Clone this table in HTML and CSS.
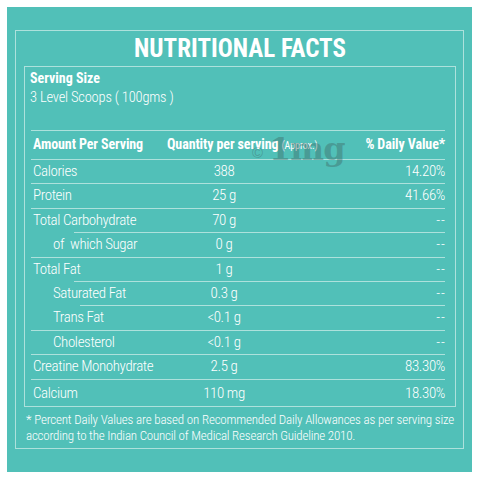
FILE: index.html
```html
<!DOCTYPE html>
<html>
<head>
<meta charset="utf-8">
<link rel="stylesheet" href="styles.css">
</head>
<body>
<div class="card">
  <div class="frame">
    <h1 class="title">NUTRITIONAL FACTS</h1>
    <div class="box">
      <div class="serving">
        <div class="serving-label">Serving Size</div>
        <div class="serving-value">3 Level Scoops ( 100gms )</div>
      </div>
      <div class="table">
        <div class="row head">
          <span class="c1">Amount Per Serving</span>
          <span class="c2">Quantity per serving <small>(Approx.)</small></span>
          <span class="c3">% Daily Value*</span>
        </div>
        <div class="row">
          <span class="c1">Calories</span><span class="c2">388</span><span class="c3">14.20%</span>
        </div>
        <div class="row">
          <span class="c1">Protein</span><span class="c2">25 g</span><span class="c3">41.66%</span>
        </div>
        <div class="row ind-line">
          <span class="c1">Total Carbohydrate</span><span class="c2">70 g</span><span class="c3 dash">--</span>
        </div>
        <div class="row">
          <span class="c1 sub">of&nbsp; which Sugar</span><span class="c2">0 g</span><span class="c3 dash">--</span>
        </div>
        <div class="row ind-line">
          <span class="c1">Total Fat</span><span class="c2">1 g</span><span class="c3 dash">--</span>
        </div>
        <div class="row ind-line2">
          <span class="c1 sub">Saturated Fat</span><span class="c2">0.3 g</span><span class="c3 dash">--</span>
        </div>
        <div class="row">
          <span class="c1 sub">Trans Fat</span><span class="c2">&lt;0.1 g</span><span class="c3 dash">--</span>
        </div>
        <div class="row">
          <span class="c1 sub">Cholesterol</span><span class="c2">&lt;0.1 g</span><span class="c3 dash">--</span>
        </div>
        <div class="row">
          <span class="c1">Creatine Monohydrate</span><span class="c2">2.5 g</span><span class="c3">83.30%</span>
        </div>
        <div class="row last">
          <span class="c1">Calcium</span><span class="c2">110 mg</span><span class="c3">18.30%</span>
        </div>
      </div>
    </div>
    <p class="note">* Percent Daily Values are based on Recommended Daily Allowances as per serving size according to the Indian Council of Medical Research Guideline 2010.</p>
  </div>
</div>
</body>
</html>
```

FILE: styles.css
```css
html, body {
  margin: 0;
  padding: 0;
  background: #ffffff;
}
body {
  padding: 7px;
  font-family: "Roboto Condensed", "Liberation Sans Narrow", "Liberation Sans", sans-serif;
  color: #ffffff;
}
.card {
  width: 465px;
  height: 465px;
  box-sizing: border-box;
  background: #51c0b8;
  padding: 23px 8px 23px 8px;
}
.frame {
  height: 100%;
  box-sizing: border-box;
  border: 1px solid #ade1dc;
  padding: 0 7px 0 8px;
  display: flex;
  flex-direction: column;
}
.title {
  margin: 0;
  font-size: 25px;
  line-height: 35px;
  font-weight: bold;
  text-align: center;
  color: #ffffff;
}
.box {
  border: 1px solid #ade1dc;
  padding: 0 10px 0 6px;
}
.serving {
  padding: 2px 0 0 0;
  margin-left: -1px;
  height: 63px;
  box-sizing: border-box;
}
.serving-label {
  font-weight: bold;
  font-size: 14px;
  line-height: 19px;
}
.serving-value {
  font-size: 14.5px;
  font-weight: 300;
  line-height: 19px;
  letter-spacing: -0.2px;
}
.table {
  position: relative;
  border-top: 1px solid #ade1dc;
}
.table::before {
  content: "©";
  position: absolute;
  left: 221px;
  top: 14px;
  font-family: "Liberation Sans", sans-serif;
  font-size: 15px;
  line-height: 15px;
  color: rgba(60, 95, 93, 0.38);
}
.table::after {
  content: "1mg";
  position: absolute;
  left: 238px;
  top: 1px;
  font-family: "DejaVu Serif", serif;
  font-weight: bold;
  font-size: 32px;
  line-height: 34px;
  letter-spacing: -1px;
  color: rgba(60, 95, 93, 0.38);
}
.row {
  display: grid;
  grid-template-columns: 130px 126px 1fr;
  font-size: 15px;
  font-weight: 300;
  letter-spacing: -0.4px;
  line-height: 23.4px;
}
.row::after {
  content: "";
  grid-column: 1 / -1;
  height: 1px;
  background: #ade1dc;
}
.row.ind-line::after {
  margin-left: 43px;
}
.row.ind-line2::after {
  margin-left: 49px;
}
.row.last::after {
  display: none;
}
.row.last {
  line-height: 26px;
}
.row.head {
  font-size: 14px;
  line-height: 27px;
  font-weight: bold;
  letter-spacing: -0.1px;
}
.c1 {
  padding-left: 2px;
  white-space: nowrap;
}
.c1.sub {
  padding-left: 22px;
}
.c2 {
  text-align: center;
  white-space: nowrap;
}
.head .c2 {
  text-align: left;
  padding-left: 6px;
}
.head small {
  font-size: 10px;
  font-weight: normal;
}
.c3 {
  text-align: right;
  white-space: nowrap;
}
.c3.dash {
  letter-spacing: 1px;
  margin-right: -1px;
}
.note {
  margin: 5px 0 0 0;
  padding: 0 2px;
  font-size: 13px;
  font-weight: 300;
  letter-spacing: -0.2px;
  line-height: 16px;
  text-align: justify;
}
```
